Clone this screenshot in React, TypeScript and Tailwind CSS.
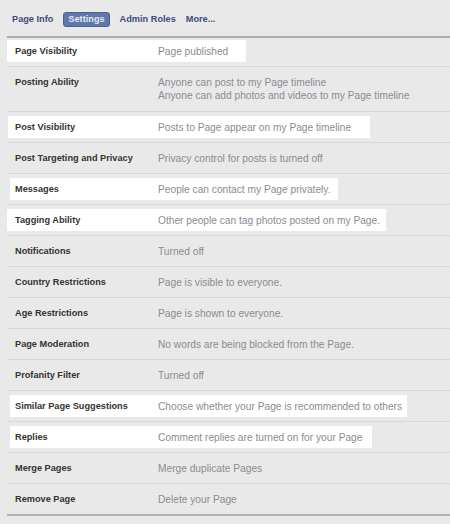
const rows: {
  label: string;
  value: string[];
  box?: string;
  pad?: string;
}[] = [
  { label: 'Page Visibility', value: ['Page published'], box: 'ml-0 w-[239px] bg-white' },
  {
    label: 'Posting Ability',
    value: ['Anyone can post to my Page timeline', 'Anyone can add photos and videos to my Page timeline'],
  },
  {
    label: 'Post Visibility',
    value: ['Posts to Page appear on my Page timeline'],
    box: 'ml-[1px] w-[362px] bg-white',
    pad: 'w-[150px] pl-[7px]',
  },
  { label: 'Post Targeting and Privacy', value: ['Privacy control for posts is turned off'] },
  {
    label: 'Messages',
    value: ['People can contact my Page privately.'],
    box: 'ml-[3px] w-[328px] bg-white',
    pad: 'w-[148px] pl-[5px]',
  },
  {
    label: 'Tagging Ability',
    value: ['Other people can tag photos posted on my Page.'],
    box: 'ml-0 w-[379px] bg-white',
  },
  { label: 'Notifications', value: ['Turned off'] },
  { label: 'Country Restrictions', value: ['Page is visible to everyone.'] },
  { label: 'Age Restrictions', value: ['Page is shown to everyone.'] },
  { label: 'Page Moderation', value: ['No words are being blocked from the Page.'] },
  { label: 'Profanity Filter', value: ['Turned off'] },
  {
    label: 'Similar Page Suggestions',
    value: ['Choose whether your Page is recommended to others'],
    box: 'ml-[3px] w-[397px] bg-white',
    pad: 'w-[148px] pl-[5px]',
  },
  {
    label: 'Replies',
    value: ['Comment replies are turned on for your Page'],
    box: 'ml-[3px] w-[362px] bg-white',
    pad: 'w-[148px] pl-[5px]',
  },
  { label: 'Merge Pages', value: ['Merge duplicate Pages'] },
  { label: 'Remove Page', value: ['Delete your Page'] },
];

function Tab({ label, active }: { label: string; active?: boolean }) {
  if (active) {
    return (
      <span className="rounded-[3px] border border-[#4a6196] bg-[#5f78ab] px-[4px] leading-[13px] text-[#e4e8f1]">
        {label}
      </span>
    );
  }
  return <span className="text-[#3b4f7f]">{label}</span>;
}

export default function App() {
  return (
    <div
      className="min-h-[524px] w-[450px] bg-[#e9e9e9] pl-[7px]"
      style={{ fontFamily: '"Liberation Sans", Arial, sans-serif' }}
    >
      <div className="flex h-[27px] items-center gap-[10px] pl-[5px] pt-[12px] text-[9.2px] font-bold">
        <Tab label="Page Info" />
        <Tab label="Settings" active />
        <Tab label="Admin Roles" />
        <Tab label="More..." />
      </div>
      <div className="mt-[9px] border-t-2 border-[#acacac]">
        {rows.map((r, i) => (
          <div
            key={r.label}
            className={`border-b border-[#d7d7d7] py-[4px] ${i === 0 ? 'pt-[2px]' : ''} ${
              i === 1 ? 'pb-[5px]' : ''
            } ${i === rows.length - 1 ? 'border-b-2 border-b-[#b3b3b3]' : ''}`}
          >
            <div className={`flex items-start py-[5px] pb-[4px] ${r.box ?? 'ml-0 w-full'}`}>
              <div
                className={`shrink-0 text-[9.2px] font-bold leading-[13px] text-[#333] ${
                  r.pad ?? 'w-[151px] pl-[8px]'
                }`}
              >
                {r.label}
              </div>
              <div className="text-[10.2px] leading-[13px] text-[#8a8c91]">
                {r.value.map((v) => (
                  <div key={v}>{v}</div>
                ))}
              </div>
            </div>
          </div>
        ))}
      </div>
    </div>
  );
}
